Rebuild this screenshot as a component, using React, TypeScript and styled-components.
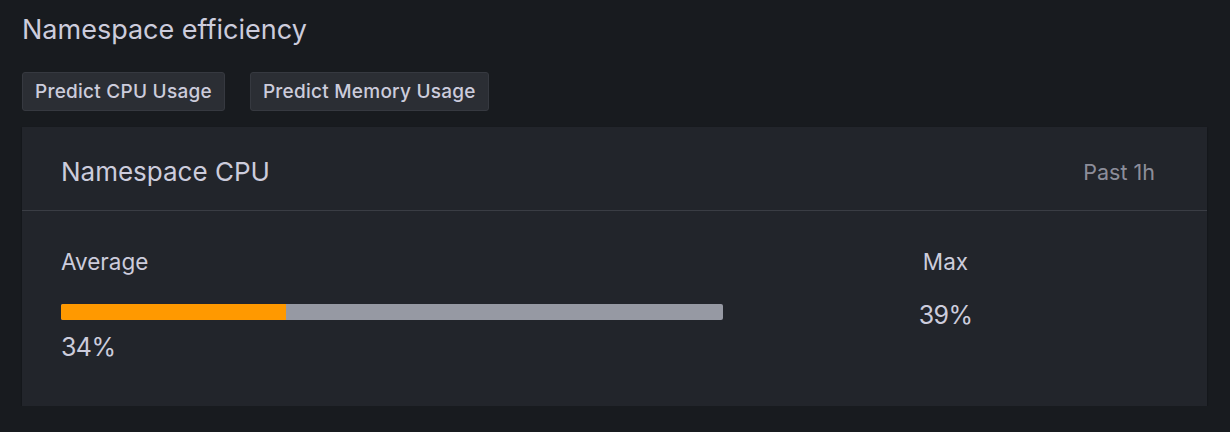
import React from "react";
import styled, { createGlobalStyle } from "styled-components";

const GlobalStyle = createGlobalStyle`
  html, body {
    margin: 0;
    padding: 0;
    background: #181b1f;
  }
  body {
    font-family: Inter, "Noto Sans", sans-serif;
    color: #ccccdc;
  }
`;

const Page = styled.div`
  padding: 14px 23px 0 22px;
  display: flex;
  flex-direction: column;
`;

const Title = styled.h2`
  margin: 0;
  font-size: 27px;
  line-height: 32px;
  font-weight: 400;
  color: #ccccdc;
`;

const Toolbar = styled.div`
  display: flex;
  gap: 25px;
  margin-top: 26px;
`;

const Button = styled.button`
  height: 39px;
  padding: 0 12px;
  background: #2b2e34;
  border: 1px solid #363940;
  border-radius: 3px;
  color: #ccccdc;
  font-family: inherit;
  font-size: 19px;
  letter-spacing: 0.25px;
  font-weight: 500;
  cursor: pointer;
`;

const Panel = styled.section`
  margin-top: 16px;
  background: #22252b;
  box-shadow: 0 1px 2px rgba(0, 0, 0, 0.4);
`;

const PanelHeader = styled.header`
  display: flex;
  align-items: center;
  justify-content: space-between;
  padding: 29px 52px 22px 39px;
  border-bottom: 1px solid #3a3d44;
`;

const PanelTitle = styled.h3`
  margin: 0;
  font-size: 26px;
  line-height: 32px;
  font-weight: 400;
`;

const Range = styled.span`
  font-size: 21.5px;
  line-height: 32px;
  color: rgba(204, 204, 220, 0.65);
`;

const PanelBody = styled.div`
  display: grid;
  grid-template-columns: 59.8% 1fr;
  padding: 37px 39px 42px 39px;
`;

const Stat = styled.div<{ $center?: boolean }>`
  display: flex;
  flex-direction: column;
  align-items: ${(p) => (p.$center ? "center" : "stretch")};
`;

const Label = styled.div`
  font-size: 22.5px;
  line-height: 28px;
`;

const Value = styled.div<{ $gap: number }>`
  margin-top: ${(p) => p.$gap}px;
  font-size: 25px;
  letter-spacing: -0.6px;
  line-height: 34px;
`;

const Track = styled.div`
  margin-top: 28px;
  height: 16px;
  background: #9699a3;
  border-radius: 2px;
  display: flex;
  overflow: hidden;
`;

const Fill = styled.div`
  background: #ff9900;
  height: 100%;
`;

export default function App() {
  const average = 34;
  const max = 39;
  return (
    <>
      <GlobalStyle />
      <Page>
        <Title>Namespace efficiency</Title>
        <Toolbar>
          <Button>Predict CPU Usage</Button>
          <Button>Predict Memory Usage</Button>
        </Toolbar>
        <Panel>
          <PanelHeader>
            <PanelTitle>Namespace CPU</PanelTitle>
            <Range>Past 1h</Range>
          </PanelHeader>
          <PanelBody>
            <Stat>
              <Label>Average</Label>
              <Track>
                <Fill style={{ width: `${average}%` }} />
              </Track>
              <Value $gap={10}>{average}%</Value>
            </Stat>
            <Stat $center>
              <Label>Max</Label>
              <Value $gap={22}>{max}%</Value>
            </Stat>
          </PanelBody>
        </Panel>
      </Page>
    </>
  );
}
